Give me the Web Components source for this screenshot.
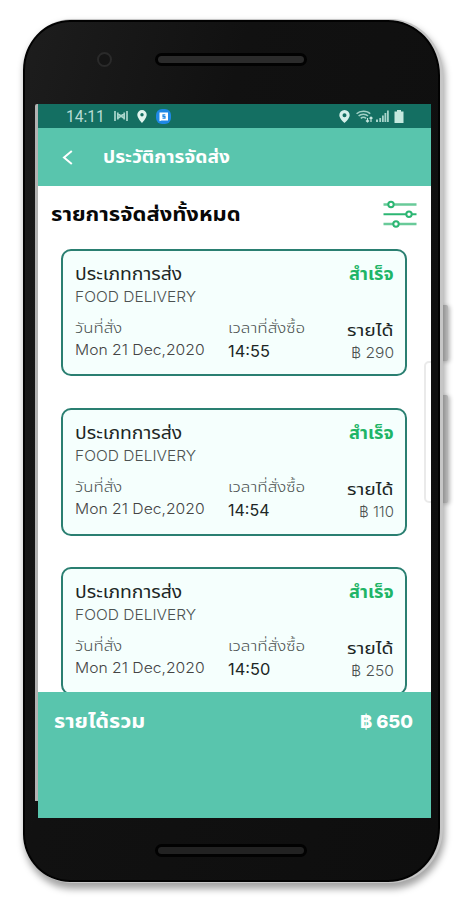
<!DOCTYPE html>
<html lang="th">
<head>
<meta charset="utf-8">
<title>ประวัติการจัดส่ง</title>
<style>
  body {
    margin: 0;
    background: #fff;
    font-family: "Inter", "Noto Sans Thai", "Noto Sans", sans-serif;
    overflow: hidden;
  }
</style>
</head>
<body>
<phone-frame>
  <status-bar></status-bar>
  <app-header></app-header>
  <delivery-list></delivery-list>
  <total-bar></total-bar>
</phone-frame>

<script>
/** Shared base: renders `template` and `css` into an open shadow root. */
class BaseElement extends HTMLElement {
  connectedCallback(){
    if(!this.shadowRoot) this.attachShadow({mode: 'open'})
    this.shadowRoot.innerHTML = `<style>:host { display: block; box-sizing: border-box; } * { box-sizing: border-box; } svg { display: block; } ${this.css}</style>${this.template}`
    this.ready()
  }
  ready(){}
}

/** One line of text, stretched or condensed to the width in `w`. */
class FitText extends BaseElement {
  get template(){ return `<span><slot></slot></span>` }
  get css(){ return /* css */`
    :host { display: block; white-space: nowrap; flex: none; width: ${this.getAttribute('w')}px; }
    span { display: inline-block; transform-origin: 0 0; vertical-align: top; }
  `}
  ready(){
    const span = this.shadowRoot.querySelector('span')
    span.style.transform = `scaleX(${this.getAttribute('w') / span.offsetWidth})`
  }
}
customElements.define('fit-text', FitText)

class PhoneFrame extends BaseElement {
  get template(){ return /* html */`
    <i class="key power"></i><i class="key volume"></i>
    <div class="body">
      <div class="top"><i class="camera"></i><i class="speaker"></i></div>
      <div class="middle"><i class="glint"></i><div class="screen"><slot></slot></div></div>
      <div class="bottom"><i class="speaker"></i></div>
    </div>
    <i class="ghost"></i>
  `}
  get css(){ return /* css */`
    :host { position: relative; width: 466px; height: 900px; padding: 20px 0 0 23px; overflow: hidden; }
    .body {
      position: relative;
      width: 417px;
      height: 862px;
      border: 2px solid #020202;
      border-radius: 47px 52px 52px 47px / 50px 55px 54px 48px;
      background: linear-gradient(105deg, #1d1d1d, #111 35%, #0e0e0e);
      box-shadow: 2px 0 0 1px #c6c6c6, 3px 5px 7px 2px rgba(0, 0, 0, .36);
    }
    .top { height: 82px; display: flex; align-items: center; padding: 0 0 8px 72px; gap: 48px; }
    .camera { width: 15px; height: 15px; border-radius: 50%; border: 2px solid #2a2a2a; background: #151515; }
    .speaker { width: 152px; height: 13px; border-radius: 8px; border: 3px solid #020202; background: #2b2b2b; }
    .top .speaker { margin-left: -5px; }
    .middle { display: flex; height: 714px; padding-left: 10px; }
    .glint { width: 3px; height: 697px; background: #b2b2b2; border-radius: 2px 0 0 0; }
    .screen { width: 393px; height: 714px; background: #fff; display: flex; flex-direction: column; overflow: hidden; }
    .bottom { padding: 26px 0 0 130px; }
    .bottom .speaker { display: block; background: #222; }
    .key { position: absolute; left: 440px; width: 8px; background: #c6c6c6; box-shadow: 2px 1px 4px #c4c4c4; border-radius: 2px; }
    .power { top: 305px; height: 56px; }
    .volume { top: 395px; height: 108px; }
    .ghost { position: absolute; left: 424px; top: 361px; width: 22px; height: 142px; border: 2px solid rgba(170, 170, 170, .25); border-radius: 5px; clip-path: inset(0 15px 0 0); }
  `}
}
customElements.define('phone-frame', PhoneFrame)

class StatusBar extends BaseElement {
  get template(){ return /* html */`
    <fit-text w="39">14:11</fit-text>
    <svg class="vibe" width="14" height="12" viewBox="0 0 14 12" fill="none" stroke="#a9d6cc" stroke-width="1.7"><path d="M1 1v10M13 1v10M3.800 2.500v7M10.200 2.500v7M3.500 3.500L7 6l3.500-2.500M3.500 8.500L7 6l3.500 2.500"/></svg>
    <svg class="pin" width="10" height="13" viewBox="0 0 10 13"><path fill="#e0f5ef" fill-rule="evenodd" d="M5 0a4.700 4.700 0 0 0-4.700 4.700C.3 8 5 13 5 13s4.700-5 4.700-8.300A4.700 4.700 0 0 0 5 0zm0 3a1.700 1.700 0 1 1 0 3.400A1.700 1.700 0 0 1 5 3z"/></svg>
    <svg class="app" width="15" height="15" viewBox="0 0 15 15"><rect width="15" height="15" rx="6" fill="#1e88e5"/><path d="M3.500 3.500h8.500v8H5.500l-2 .7z" fill="#fff"/><path d="M9.300 5.800H7v1.700h2v1.700H6.500" fill="none" stroke="#1e88e5" stroke-width="1.200"/></svg>
    <span></span>
    <svg class="loc" width="11" height="13" viewBox="0 0 11 13"><path fill="#d6f0ea" fill-rule="evenodd" d="M5.500 0A5.200 5.200 0 0 0 .3 5.200C.3 8.500 5.500 13 5.500 13s5.200-4.500 5.200-7.800A5.200 5.200 0 0 0 5.500 0zm0 3.200a2 2 0 1 1 0 4 2 2 0 0 1 0-4z"/></svg>
    <svg class="wifi" width="17" height="13" viewBox="0 0 17 13" fill="none" stroke="#9fd0c5" stroke-width="1.600"><path d="M.6 3.800C4 .4 11 .4 14.200 3.800M2.600 6C5 3.600 9.800 3.600 12 6M4.800 8.300C6.200 7 8.600 7 10 8.300"/><path d="M11.500 8v4M10 10.500l1.500 1.500 1.500-1.500M15 12V7M13.500 8.500L15 7l1.500 1.500" stroke="#c5e6de" stroke-width="1.200"/></svg>
    <svg class="bars" width="13" height="12" viewBox="0 0 13 12" fill="#a5d4ca"><path d="M0 9.500h2V12H0zM3.300 8h1.800v4H3.300zM6 5.500h1.800V12H6zM8.500 3h1.800v9H8.500zM11 .5h1.800V12H11z"/></svg>
    <svg width="10" height="13" viewBox="0 0 10 13"><path d="M3 0h4v1.500h2.500V13H.5V1.500H3z" fill="#c5e9df"/></svg>
  `}
  get css(){ return /* css */`
    :host { display: flex; align-items: center; height: 24px; flex: none; padding: 0 27px 0 28px; background: #146f62; color: #b9ddd5; font: 400 16px/25px Roboto, sans-serif; }
    span { flex: 1; }
    .vibe { margin-left: 9px; }
    .pin { margin-left: 9px; }
    .app { margin-left: 9px; }
    .wifi { margin-left: 6px; }
    .bars { margin: 0 5px 0 3px; }
  `}
}
customElements.define('status-bar', StatusBar)

class AppHeader extends BaseElement {
  get template(){ return /* html */`
    <svg width="11" height="15" viewBox="0 0 11 15" fill="none" stroke="#fff" stroke-width="2"><path d="M9.800 1L2 7.500 9.800 14"/></svg>
    <fit-text w="127">ประวัติการจัดส่ง</fit-text>
  `}
  get css(){ return /* css */`
    :host { display: flex; align-items: center; gap: 30px; height: 58px; flex: none; padding-left: 24px; background: #59c5ad; color: #fff; font-size: 17.500px; line-height: 28px; font-weight: 700; }
  `}
}
customElements.define('app-header', AppHeader)

/** One delivery; takes its values from `time` and `amount`. */
class DeliveryCard extends BaseElement {
  get template(){
    const amount = this.getAttribute('amount')
    return /* html */`
    <div class="row">
      <div>
        <fit-text class="type" w="107">ประเภทการส่ง</fit-text>
        <fit-text class="food" w="121">FOOD DELIVERY</fit-text>
      </div>
      <fit-text class="done" w="45">สำเร็จ</fit-text>
    </div>
    <div class="row details">
      <div class="date">
        <fit-text class="label" w="47">วันที่สั่ง</fit-text>
        <fit-text class="value" w="130">Mon 21 Dec,2020</fit-text>
      </div>
      <div class="time">
        <fit-text class="label" w="77">เวลาที่สั่งซื้อ</fit-text>
        <fit-text class="clock" w="42">${this.getAttribute('time')}</fit-text>
      </div>
      <div class="income">
        <fit-text class="earn" w="47">รายได้</fit-text>
        <fit-text class="baht" w="${amount == 110 ? 35 : 43}">฿ ${amount}</fit-text>
      </div>
    </div>
  `}
  get css(){ return /* css */`
    :host { width: 346px; height: 127.500px; flex: none; padding: 10px 11px 0 12px; border: 2px solid #2a7f71; border-radius: 10px; background: #f5fffd; color: #202625; }
    .row { display: flex; justify-content: space-between; }
    .type { font-size: 17px; line-height: 26px; }
    .food { font-size: 14.500px; line-height: 20px; font-weight: 300; color: #4c5251; }
    .done { font-size: 17px; line-height: 26px; font-weight: 700; color: #1fb567; }
    .details { margin-top: 9px; justify-content: flex-start; }
    .date { width: 153px; }
    .time { flex: 1; }
    .label { font-size: 15px; line-height: 24px; font-weight: 300; color: #4a504f; }
    .value { font-size: 14.500px; line-height: 20px; font-weight: 300; color: #444; }
    .clock { font-size: 16px; line-height: 23px; }
    .income { display: flex; flex-direction: column; align-items: flex-end; padding-top: 2px; }
    .earn { font-size: 16.500px; line-height: 24px; }
    .baht { font-size: 14.500px; line-height: 21px; font-weight: 300; color: #4c5251; }
  `}
}
customElements.define('delivery-card', DeliveryCard)

class DeliveryList extends BaseElement {
  get template(){ return /* html */`
    <header>
      <fit-text w="190">รายการจัดส่งทั้งหมด</fit-text>
      <svg width="34" height="28" viewBox="0 0 34 28" fill="#fff" stroke="#2cb673" stroke-width="2">
        <path d="M.5 4.500h33M.5 24h33" stroke="#69ca99" stroke-width="2.600"/><path d="M.5 14.300h33"/>
        <circle cx="8" cy="4.500" r="2.700"/><circle cx="26" cy="14.300" r="2.700"/><circle cx="13" cy="24" r="2.700"/>
      </svg>
    </header>
    <delivery-card time="14:55" amount="290"></delivery-card>
    <delivery-card time="14:54" amount="110"></delivery-card>
    <delivery-card time="14:50" amount="250"></delivery-card>
  `}
  get css(){ return /* css */`
    :host { display: flex; flex-direction: column; align-items: flex-start; gap: 31.800px; height: 506px; flex: none; overflow: hidden; padding-left: 23px; background: #fff; }
    header { display: flex; justify-content: space-between; align-items: center; align-self: stretch; height: 56px; margin: 0 0 -25px -23px; padding: 0 14px 0 13px; color: #080808; font-size: 20px; line-height: 30px; font-weight: 700; flex: none; }
  `}
}
customElements.define('delivery-list', DeliveryList)

class TotalBar extends BaseElement {
  get template(){ return /* html */`
    <fit-text w="91">รายได้รวม</fit-text>
    <fit-text class="sum" w="53">฿ 650</fit-text>
  `}
  get css(){ return /* css */`
    :host { display: flex; justify-content: space-between; flex: 1; padding: 15px 18px 0 16px; background: #59c5ad; color: #fff; font-size: 19px; line-height: 30px; font-weight: 700; }
    .sum { font-size: 18px; font-weight: 800; }
  `}
}
customElements.define('total-bar', TotalBar)
</script>
</body>
</html>
